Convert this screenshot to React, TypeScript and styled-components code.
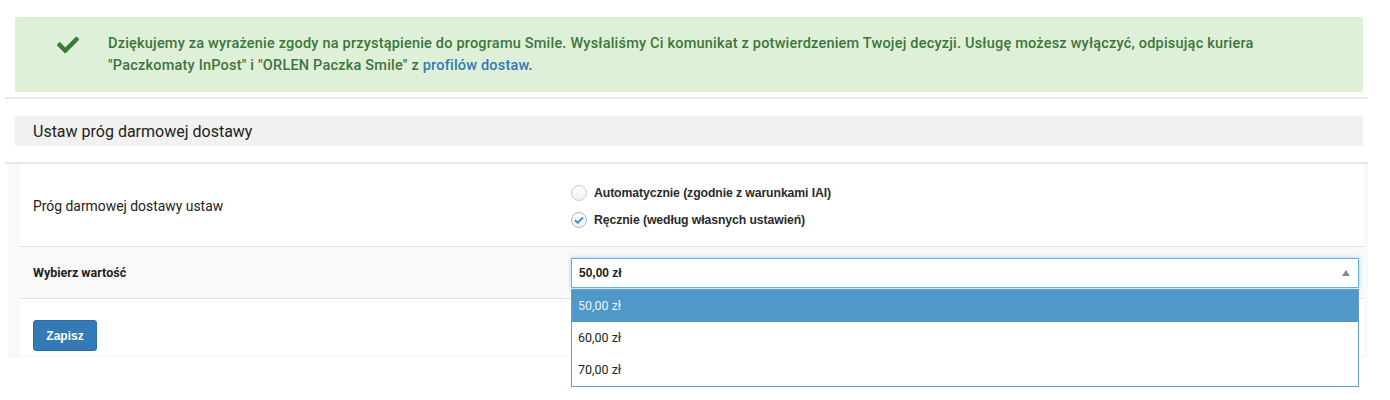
import styled, {createGlobalStyle} from "styled-components";
import {FaCheck} from "react-icons/fa";

const GlobalStyle = createGlobalStyle`
  body {
    margin: 0;
    background: #ffffff;
    font-family: Roboto, "Liberation Sans", sans-serif;
    color: #333333;
  }
`;

const Page = styled.div`
  width: 1390px;
  min-height: 400px;
  box-sizing: border-box;
  padding-top: 17px;
`;

const Alert = styled.div`
  display: flex;
  align-items: flex-start;
  margin: 0 27px 0 15px;
  padding: 16px 20px 15px 42px;
  background-color: #dff0d8;
  border-radius: 2px;
  color: #3c763d;
  font-size: 14.5px;
  font-weight: 500;
  letter-spacing: 0.2px;
  line-height: 22px;
`;

const AlertIcon = styled.span`
  display: flex;
  flex: none;
  width: 24px;
  margin: 1px 27px 0 0;
  color: #3b7a39;
  font-size: 22px;
`;

const Link = styled.a`
  color: #337ab7;
  text-decoration: none;
`;

const Divider = styled.hr<{$top: number}>`
  margin: ${({$top}) => $top}px 22px 0 5px;
  border: none;
  border-top: 2px solid #e9e9e9;
`;

const SectionHeader = styled.h2`
  margin: 17px 27px 0 15px;
  height: 30px;
  padding-left: 18px;
  display: flex;
  align-items: center;
  background-color: #f1f1f1;
  font-size: 16px;
  font-weight: 400;
  color: #222222;
`;

const Form = styled.div`
  margin: 0 22px 0 8px;
  padding: 1px 4px 3px 12px;
  background-color: #f9f9f9;
`;

const Row = styled.div<{$muted?: boolean; $height: number}>`
  display: grid;
  grid-template-columns: 538px 1fr;
  align-items: center;
  height: ${({$height}) => $height}px;
  padding: 0 5px 0 13px;
  background-color: ${({$muted}) => ($muted ? "#f9f9f9" : "#ffffff")};
  border-bottom: 1px solid #e3e3e3;
`;

const ButtonRow = styled.div`
  height: 56px;
  padding: 21px 0 0 13px;
  box-sizing: border-box;
  background-color: #ffffff;
`;

const Label = styled.span<{$bold?: boolean}>`
  font-family: Roboto, sans-serif;
  font-size: ${({$bold}) => ($bold ? "12.5px" : "13.9px")};
  font-weight: ${({$bold}) => ($bold ? 700 : 400)};
  color: #222222;
`;

const RadioGroup = styled.div`
  display: flex;
  flex-direction: column;
  gap: 11px;
  margin-top: 2px;
`;

const RadioOption = styled.label`
  display: flex;
  align-items: center;
  gap: 7px;
  font-family: "Liberation Sans", Arial, sans-serif;
  font-size: 12.25px;
  font-weight: 700;
  color: #2a2a2a;
  letter-spacing: -0.1px;
`;

const RadioCircle = styled.span<{$checked?: boolean}>`
  display: flex;
  align-items: center;
  justify-content: center;
  width: 16px;
  height: 16px;
  box-sizing: border-box;
  border-radius: 50%;
  border: 1px solid ${({$checked}) => ($checked ? "#b9b9b9" : "#cfcfcf")};
  background: linear-gradient(#ffffff, #f1f1f1);
  box-shadow: inset 0 1px 1px rgba(0, 0, 0, 0.04);
`;

const SelectWrap = styled.div`
  position: relative;
`;

const SelectBox = styled.div`
  display: flex;
  align-items: center;
  justify-content: space-between;
  height: 30px;
  box-sizing: border-box;
  padding: 0 8px 0 7px;
  background-color: #ffffff;
  border: 1px solid #66afe9;
  box-shadow: 0 0 4px rgba(102, 175, 233, 0.6);
  font-family: "Liberation Sans", Arial, sans-serif;
  font-size: 12px;
  font-weight: 700;
  color: #222222;
`;

const Arrow = styled.span`
  width: 0;
  height: 0;
  border-left: 4px solid transparent;
  border-right: 4px solid transparent;
  border-bottom: 6px solid #888888;
`;

const Menu = styled.ul`
  position: absolute;
  top: 31px;
  left: 0;
  right: 0;
  margin: 0;
  padding: 0;
  list-style: none;
  background-color: #ffffff;
  border: 1px solid #5f9fd3;
  z-index: 2;
`;

const MenuItem = styled.li<{$active?: boolean}>`
  height: 32px;
  display: flex;
  align-items: center;
  padding-left: 6px;
  background-color: ${({$active}) => ($active ? "#4f98c7" : "#ffffff")};
  color: ${({$active}) => ($active ? "#e9f2f9" : "#222222")};
  font-family: Roboto, sans-serif;
  font-size: 12.5px;
`;

const SaveButton = styled.button`
  width: 64px;
  height: 31px;
  border: 1px solid #2e6da4;
  border-radius: 3px;
  background-color: #337ab7;
  color: #ffffff;
  font-family: "Liberation Sans", Arial, sans-serif;
  font-size: 12px;
  font-weight: 700;
`;

const values = ["50,00 zł", "60,00 zł", "70,00 zł"];

export default function App() {
  return (
    <Page>
      <GlobalStyle />
      <Alert>
        <AlertIcon>
          <FaCheck />
        </AlertIcon>
        <div>
          Dziękujemy za wyrażenie zgody na przystąpienie do programu Smile. Wysłaliśmy Ci komunikat z
          potwierdzeniem Twojej decyzji. Usługę możesz wyłączyć, odpisując kuriera
          <br />
          "Paczkomaty InPost" i "ORLEN Paczka Smile" z <Link href="#">profilów dostaw</Link>.
        </div>
      </Alert>

      <Divider $top={5} />
      <SectionHeader>Ustaw próg darmowej dostawy</SectionHeader>
      <Divider $top={16} />

      <Form>
        <Row $height={81}>
          <Label>Próg darmowej dostawy ustaw</Label>
          <RadioGroup>
            <RadioOption>
              <RadioCircle />
              Automatycznie (zgodnie z warunkami IAI)
            </RadioOption>
            <RadioOption>
              <RadioCircle $checked>
                <svg width="10" height="8" viewBox="0 0 10 8">
                  <path d="M1 4.2 L3.8 6.8 L9 1.3" fill="none" stroke="#2f8fdc" strokeWidth="1.9" />
                </svg>
              </RadioCircle>
              Ręcznie (według własnych ustawień)
            </RadioOption>
          </RadioGroup>
        </Row>

        <Row $muted $height={51}>
          <Label $bold>Wybierz wartość</Label>
          <SelectWrap>
            <SelectBox>
              {values[0]}
              <Arrow />
            </SelectBox>
            <Menu>
              {values.map((v, i) => (
                <MenuItem key={v} $active={i === 0}>
                  {v}
                </MenuItem>
              ))}
            </Menu>
          </SelectWrap>
        </Row>

        <ButtonRow>
          <SaveButton>Zapisz</SaveButton>
        </ButtonRow>
      </Form>
    </Page>
  );
}
